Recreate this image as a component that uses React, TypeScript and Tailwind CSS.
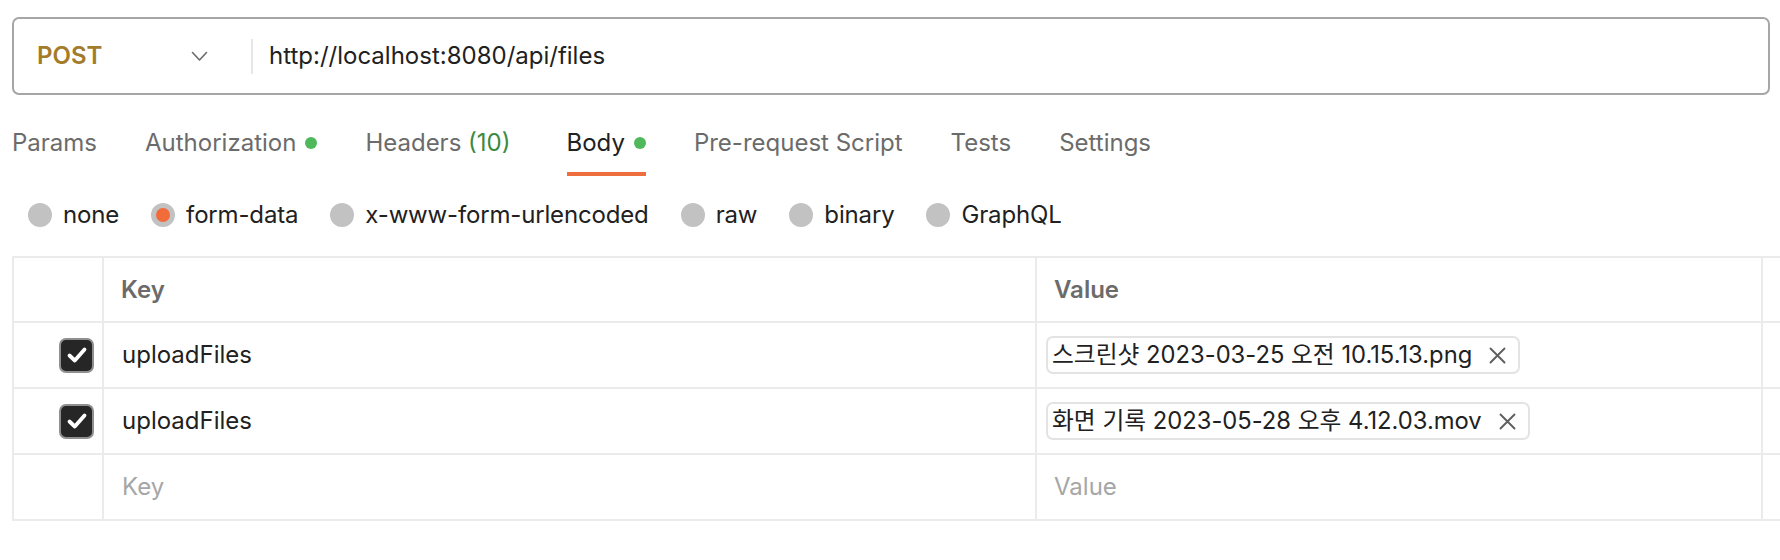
import React from 'react';

const tabs = [
  { label: 'Params' },
  { label: 'Authorization', dot: true },
  { label: 'Headers', count: '(10)' },
  { label: 'Body', dot: true, active: true },
  { label: 'Pre-request Script' },
  { label: 'Tests' },
  { label: 'Settings' },
];

const bodyTypes = ['none', 'form-data', 'x-www-form-urlencoded', 'raw', 'binary', 'GraphQL'];

const rows = [
  { key: 'uploadFiles', file: '스크린샷 2023-03-25 오전 10.15.13.png' },
  { key: 'uploadFiles', file: '화면 기록 2023-05-28 오후 4.12.03.mov' },
];

function Checkbox() {
  return (
    <div className="w-[35px] h-[35px] rounded-[7px] bg-[#262626] border-2 border-[#8f8f8f] flex items-center justify-center">
      <svg width="22" height="22" viewBox="0 0 22 22" fill="none">
        <path d="M3.5 11.5 L8.8 16.5 L18.5 5.5" stroke="white" strokeWidth="3.8" strokeLinecap="round" strokeLinejoin="round" />
      </svg>
    </div>
  );
}

function FileChip({ name }: { name: string }) {
  return (
    <div className="ml-[9px] h-[38px] flex items-center gap-[17px] pl-[4px] pr-[12px] border-2 border-[#e3e3e3] rounded-[7px] text-[23.75px] text-[#212121] whitespace-nowrap">
      <span>{name}</span>
      <svg width="17" height="17" viewBox="0 0 17 17" fill="none">
        <path d="M1.5 1.5 L15.5 15.5 M15.5 1.5 L1.5 15.5" stroke="#5e5e5e" strokeWidth="1.9" strokeLinecap="round" />
      </svg>
    </div>
  );
}

export default function App() {
  return (
    <div className="w-[1780px] h-[560px] overflow-hidden bg-white font-['Inter','Noto_Sans_CJK_KR',sans-serif] text-[#212121]">
      {/* URL bar */}
      <div className="pl-3 pr-[10px] pt-[17px]">
        <div className="h-[78px] border-2 border-[#a6a6a6] rounded-[7px] flex items-center">
          <div className="w-[237px] pl-[23px] pr-[43px] flex items-center justify-between">
            <span className="text-[24px] font-semibold text-[#a37c2b]">POST</span>
            <svg width="17" height="11" viewBox="0 0 17 11" fill="none">
              <path d="M1.5 1.5 L8.5 9 L15.5 1.5" stroke="#6b6b6b" strokeWidth="1.6" strokeLinecap="round" strokeLinejoin="round" />
            </svg>
          </div>
          <div className="w-[2px] h-[35px] bg-[#e6e6e6]" />
          <div className="pl-4 text-[24px]">http://localhost:8080/api/files</div>
        </div>
      </div>

      {/* Tabs */}
      <div className="mt-[33px] pl-[12px] flex gap-[48px] text-[24px] leading-[30px]">
        {tabs.map((t) => (
          <div key={t.label} className={`flex flex-col ${t.active ? 'ml-[8px]' : ''}`}>
            <div className={`flex items-center gap-[9px] ${t.active ? 'text-[#212121]' : 'text-[#6b6b6b]'}`}>
              <span>
                {t.label}
                {t.count && <span className="text-[#3b8a3f]"> {t.count}</span>}
              </span>
              {t.dot && <span className="w-3 h-3 rounded-full bg-[#4fb85a]" />}
            </div>
            <div className={`mt-[14px] h-1 ${t.active ? 'bg-[#ee6e3d]' : 'bg-transparent'}`} />
          </div>
        ))}
      </div>

      {/* Body types */}
      <div className="mt-6 pl-[28px] flex gap-[32px] text-[24px] leading-[30px] tracking-[-0.16px]">
        {bodyTypes.map((b) => (
          <div key={b} className="flex items-center gap-[11px]">
            <span className="w-6 h-6 rounded-full bg-[#c2c2c2] flex items-center justify-center">
              {b === 'form-data' && <span className="w-[14px] h-[14px] rounded-full bg-[#f26b3a]" />}
            </span>
            <span>{b}</span>
          </div>
        ))}
      </div>

      {/* Table */}
      <div className="mt-[26px] ml-3 border-t-2 border-l-2 border-[#ebebeb] grid grid-cols-[90px_933px_726px_1fr] text-[24px]">
        <div className="h-[65px] border-r-2 border-b-2 border-[#ebebeb]" />
        <div className="h-[65px] border-r-2 border-b-2 border-[#ebebeb] pl-[17px] flex items-center font-semibold text-[#6b6b6b]">Key</div>
        <div className="h-[65px] border-r-2 border-b-2 border-[#ebebeb] pl-[17px] flex items-center font-semibold text-[#6b6b6b]">Value</div>
        <div className="h-[65px] border-b-2 border-[#ebebeb]" />

        {rows.map((r, i) => (
          <React.Fragment key={i}>
            <div className="h-[66px] border-r-2 border-b-2 border-[#ebebeb] flex items-center justify-end pr-[8px]">
              <Checkbox />
            </div>
            <div className="h-[66px] border-r-2 border-b-2 border-[#ebebeb] pl-[18px] flex items-center">{r.key}</div>
            <div className="h-[66px] border-r-2 border-b-2 border-[#ebebeb] flex items-center">
              <FileChip name={r.file} />
            </div>
            <div className="h-[66px] border-b-2 border-[#ebebeb]" />
          </React.Fragment>
        ))}

        <div className="h-[66px] border-r-2 border-b-2 border-[#ebebeb]" />
        <div className="h-[66px] border-r-2 border-b-2 border-[#ebebeb] pl-[18px] flex items-center text-[#a6a6a6]">Key</div>
        <div className="h-[66px] border-r-2 border-b-2 border-[#ebebeb] pl-[17px] flex items-center text-[#a6a6a6]">Value</div>
        <div className="h-[66px] border-b-2 border-[#ebebeb]" />
      </div>
    </div>
  );
}
